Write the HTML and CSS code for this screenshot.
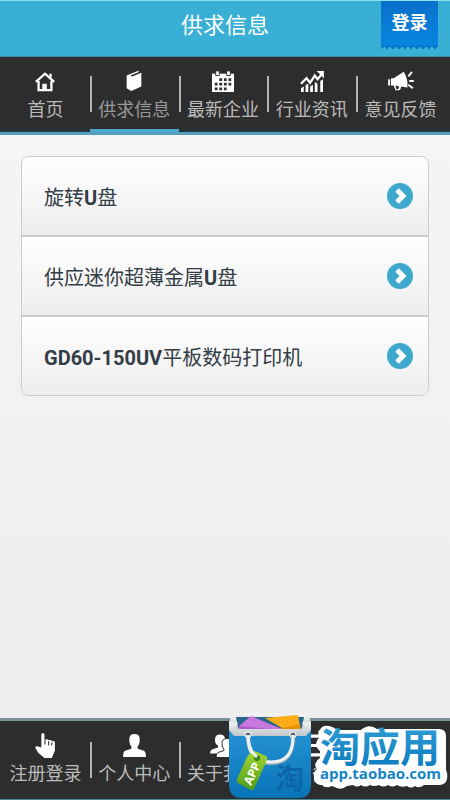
FILE: index.html
```html
<!DOCTYPE html>
<html lang="zh-CN">
<head>
  <meta charset="utf-8">
  <meta name="viewport" content="width=device-width, initial-scale=1">
  <title>供求信息</title>
  <link rel="stylesheet" href="styles.css">
</head>
<body>
<header class="header">
  <h1>供求信息</h1>
  <button class="login" type="button">登录</button>
</header>

<nav class="nav nav-top">
  <a href="#home">
    <svg class="icon" viewBox="0 0 24 24"><path d="M2 13 12 4l10 9M5 12v10h14V12M18 9V4" fill="none" stroke="#fff" stroke-width="2.500"/><path d="M9 15h5v7H9z" fill="#fff"/></svg>
    <span>首页</span>
  </a>
  <a href="#supply" class="active">
    <svg class="icon" viewBox="0 0 24 24"><path d="M4 6 16 1l2 1L8 6l2 1 10-4v15L9 23l-5-3z" fill="#fff"/></svg>
    <span>供求信息</span>
  </a>
  <a href="#company">
    <svg class="icon" viewBox="0 0 24 24"><path d="M0 4h24v20H0z" fill="#fff"/><path d="M4 1h4v5H4zM16 1h4v5h-4z" fill="#fff" stroke="#2d2d2d"/><path d="M8 9h3v3H8zM13 9h3v3h-3zM18 9h3v3h-3zM3 14h3v3H3zM8 14h3v3H8zM13 14h3v3h-3zM18 14h3v3h-3zM3 19h3v3H3zM8 19h3v3H8zM13 19h3v3h-3z" fill="#2d2d2d"/></svg>
    <span>最新企业</span>
  </a>
  <a href="#news">
    <svg class="icon wide" viewBox="0 0 28 24"><path d="m2 15 6-6 4 5 5-8 3 4 5-6" fill="none" stroke="#fff" stroke-width="2.500"/><path d="M19 1h8v8zM2 20l3-2v6H2zM7 16l3-1v9H7zM12 18l3-2v8h-3zM17 13l3 2v9h-3zM23 12l3-2v14h-3z" fill="#fff"/></svg>
    <span>行业资讯</span>
  </a>
  <a href="#feedback">
    <svg class="icon wide" viewBox="0 0 28 24"><path d="M0 10h2v7H0zM3 9h3l11-7q5 8 4 17l-7-1q0 5-4 4H8l-2-5H3z" fill="#fff"/><path d="m8 17 4 1-1 3H9z" fill="#2d2d2d"/><path d="m22 7 4-5M23 12h5M22 16l5 4" stroke="#fff" stroke-width="2"/></svg>
    <span>意见反馈</span>
  </a>
</nav>

<main class="content">
  <ul class="list">
    <li><a href="#item1"><span>旋转<b>U</b>盘</span>
      <svg class="arrow" viewBox="0 0 26 26"><circle cx="13" cy="13" r="13" fill="#3ea9cc"/><path d="m10 7 6 6-6 6" fill="none" stroke="#fff" stroke-width="5"/></svg></a></li>
    <li><a href="#item2"><span>供应迷你超薄金属<b>U</b>盘</span>
      <svg class="arrow" viewBox="0 0 26 26"><circle cx="13" cy="13" r="13" fill="#3ea9cc"/><path d="m10 7 6 6-6 6" fill="none" stroke="#fff" stroke-width="5"/></svg></a></li>
    <li><a href="#item3"><span><b>GD60-150UV</b>平板数码打印机</span>
      <svg class="arrow" viewBox="0 0 26 26"><circle cx="13" cy="13" r="13" fill="#3ea9cc"/><path d="m10 7 6 6-6 6" fill="none" stroke="#fff" stroke-width="5"/></svg></a></li>
  </ul>
</main>

<footer class="footer">
  <nav class="nav nav-bottom">
    <a href="#register">
      <svg class="icon tall" viewBox="0 0 24 24"><path d="M8 14V2q0-2 1.500-2T11 2v5q3-2 4 0 3-1 3 1 3-1 3 1v8l-3 7h-7l-6-5-3-5q1-2 3-1z" fill="#fff"/><path d="M11.500 7v4M15 8v4M18 9v3" stroke="#2d2d2d"/></svg>
      <span>注册登录</span>
    </a>
    <a href="#user">
      <svg class="icon tall" viewBox="0 0 24 24"><path d="M7 6q0-5 5-5t5 5q0 5-2 7v2l6 2q2 1 2 6H1q0-5 2-6l6-2v-2Q7 11 7 6" fill="#fff"/></svg>
      <span>个人中心</span>
    </a>
    <a href="#about">
      <svg class="icon tall wide" viewBox="0 0 28 24"><path d="M6 6q0-5 5-5t5 5q0 5-2 7v2l5 2q2 1 2 3H1q0-3 2-4l6-2v-2Q6 11 6 6" fill="#fff"/><path d="M13 10q0-5 5-5t5 5q0 4-2 6v1l4 2q2 1 2 5H7q0-4 2-5l6-2v-1q-2-2-2-6" fill="#fff" stroke="#2d2d2d"/></svg>
      <span>关于我们</span>
    </a>
    <a href="#settings">
      <svg class="icon tall" viewBox="0 0 24 24"><path d="M2 3h20M2 12h20M2 21h20" stroke="#fff" stroke-width="3"/></svg>
      <span>设备</span>
    </a>
  </nav>

  <a class="store" href="#store" aria-label="淘应用">
    <svg viewBox="0 0 224 88">
      <defs>
        <linearGradient id="bag" x2="0" y2="1"><stop stop-color="#2795d5"/><stop offset="1" stop-color="#0874b8"/></linearGradient>
        <linearGradient id="word" x2="0" y2="1"><stop stop-color="#38a3db"/><stop offset="1" stop-color="#0878bc"/></linearGradient>
        <linearGradient id="rim" x2="0" y2="1"><stop stop-color="#f5f5f5"/><stop offset="1" stop-color="#bfc6ca"/></linearGradient>
        <linearGradient id="tag" x2="0" y2="1"><stop stop-color="#a4d632"/><stop offset="1" stop-color="#4e9d16"/></linearGradient>
      </defs>
      <g transform="translate(1 1)">
        <path d="M12 0h62q6 0 9 6v14H3V6q2-6 9-6" fill="url(#rim)"/>
        <path d="M9 4h68l-3 15H12z" fill="#28668d"/>
        <path d="m12 13 12-10 31 13-3 4H13z" fill="#c777dd"/>
        <path d="m12 13 42 4-2 3H13z" fill="#ae5bc9"/>
        <path d="m38 5 33-3 3 17H57l-2-4z" fill="#ffac16"/>
        <path d="m54 15 19-4 1 9H55z" fill="#e99105"/>
        <path d="M2 12 11 22h63l10-10v59q0 14-12 14H15Q2 85 2 71z" fill="url(#bag)"/>
        <path d="M2 8q4 3 9 1l-3 6 6 1h58l6-1-3-6q5 2 9-1v9l-5 6H7l-5-6z" fill="url(#rim)"/>
      </g>
      <circle cx="22" cy="23" r="3" fill="#526473" stroke="#fff"/>
      <circle cx="67" cy="23" r="3" fill="#526473" stroke="#fff"/>
      <path d="M22 23q0 28 23 28t22-28" fill="none" stroke="#9fadb7" stroke-width="4"/>
      <path d="M22 23q0 27 23 27t22-27" fill="none" stroke="#eef1f2" stroke-width="3"/>
      <path d="m22 43 7-4 11 5q2 1 1 4L28 77q-1 2-3 1l-13-7q-2-1-1-4z" fill="url(#tag)"/>
      <circle cx="31" cy="46" r="3" fill="#397e22"/>
      <path d="M22 24q0 14 9 21" fill="none" stroke="#eef1f2" stroke-width="3"/>
      <text class="tag-text" transform="translate(25 74) rotate(-65)">APP</text>
      <text class="bag-text" x="50" y="77">淘</text>
      <path d="M94 18q2-5 9-4 5 1 8 4h24q8-7 16-1h62q7 0 7 7v34q2 4 1 9-1 6-9 6h-14q-5 4-9 1-4 3-8 0-6 2-10-1-5 3-9 0-5 3-9 0-5 2-9 0-5 3-9 0-4 3-8 0l-6 1q-5 4-10 2l-5-2q-7 3-10-1h-2q-7-2-6-8-1-5 3-8l-2-4q1-5 5-7v-7q-4-3-4-7 1-5 4-7-3-3-1-7" fill="#fff"/>
      <text class="store-name" x="94" y="50">淘应用</text>
      <text class="store-url" x="94" y="67">app.taobao.com</text>
    </svg>
  </a>
</footer>
</body>
</html>
```
FILE: styles.css
```css
* {
  box-sizing: border-box;
}

body {
  margin: 0;
  min-height: 100vh;
  display: flex;
  flex-direction: column;
  font-family: Roboto, "Noto Sans CJK SC", sans-serif;
  background: linear-gradient(#f7f7f7, #ececec);
  color: #333d45;
}

a {
  color: inherit;
  text-decoration: none;
}

.header {
  height: 57px;
  display: grid;
  grid-template-columns: 1fr auto 1fr;
  align-items: start;
  background: #3aafd5;
  border-top: 1px solid #8fe0ec;
  border-bottom: 1px solid #438aa7;
}

.header h1 {
  grid-column: 2;
  margin: 0;
  font-size: 22px;
  font-weight: 400;
  line-height: 50px;
  color: #fff;
}

.login {
  justify-self: end;
  width: 57px;
  height: 48px;
  margin-right: 12px;
  padding: 0 0 4px;
  border: 0;
  font: 700 18px/40px Roboto, "Noto Sans CJK SC", sans-serif;
  color: #fff;
  background:
    radial-gradient(circle at 3px 4px, transparent 2px, #0879d1 2px) 0 100% / 6px 4px repeat-x,
    linear-gradient(#0870cb, #0785e0) 0 0 / 100% 44px no-repeat;
}

.nav {
  display: grid;
  grid-template-columns: repeat(5, 1fr);
  padding: 0 5px 0 1px;
  background: #2d2d2d;
  color: #bbb;
}

.nav a {
  position: relative;
  display: flex;
  flex-direction: column;
  align-items: center;
  gap: 4px;
  font-size: 18px;
  line-height: 28px;
  white-space: nowrap;
}

.nav a + a::before {
  content: "";
  position: absolute;
  left: 0;
  width: 2px;
  height: 36px;
  background: #b5b5b5;
}

.nav-top {
  height: 78px;
  border-bottom: 3px solid #559fbb;
  box-shadow: inset 0 -3px #26333d;
}

.nav-top a {
  padding-top: 13px;
}

.nav-top a::before {
  top: 19px;
}

.nav-top .active {
  color: #999;
  border-bottom: 3px solid #48a9d0;
}

.icon {
  width: 22px;
  height: 22px;
}

.icon.tall {
  width: 25px;
  height: 25px;
}

.icon.wide {
  width: 28px;
}

.content {
  flex: 1;
  padding: 21px 21px 24px;
}

.list {
  margin: 0;
  padding: 0;
  list-style: none;
  border: 1px solid #ccc;
  border-radius: 8px;
  overflow: hidden;
}

.list li {
  background: linear-gradient(#fff, #eee);
}

.list li + li {
  border-top: 2px solid #ccc;
}

.list a {
  min-height: 78px;
  padding: 0 15px 0 22px;
  display: flex;
  align-items: center;
  justify-content: space-between;
  font-size: 20px;
}

.list b {
  font-weight: 700;
}

.arrow {
  flex: none;
  width: 26px;
  height: 26px;
}

.footer {
  position: relative;
}

.nav-bottom {
  height: 82px;
  border-top: 3px solid #79929a;
  border-bottom: 1px solid #448b9c;
}

.nav-bottom a {
  padding-top: 12px;
  gap: 2px;
}

.nav-bottom a::before {
  top: 21px;
}

/* store badge lies over the bottom bar */
.store {
  position: absolute;
  right: 0;
  bottom: 0;
}

.store svg {
  display: block;
  width: 224px;
  height: 88px;
}

.store-name {
  font: 700 40px "Noto Sans CJK SC", sans-serif;
  fill: url(#word);
}

.store-url {
  font: 700 15px "Open Sans", sans-serif;
  fill: #1585c8;
}

.tag-text {
  font: 700 12px "Open Sans", sans-serif;
  fill: #fff;
}

.bag-text {
  font: 700 28px "Noto Sans CJK SC", sans-serif;
  fill: #0b65a8;
}
```
